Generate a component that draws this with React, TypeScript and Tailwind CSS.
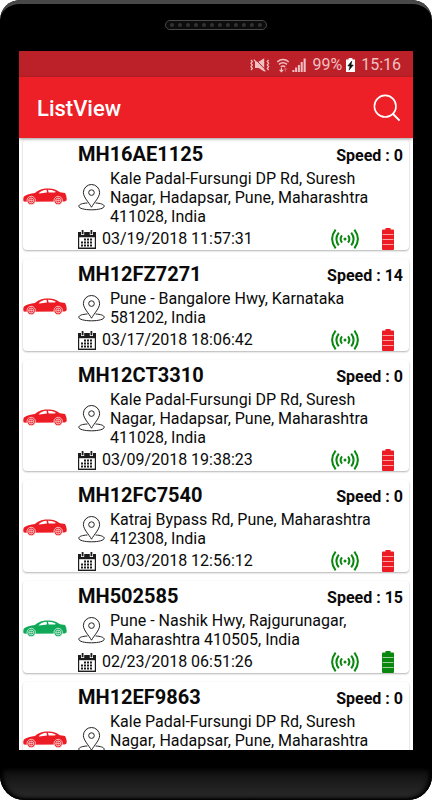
import React from 'react';

type Vehicle = {
    plate: string;
    speed: number;
    address: string;
    time?: string;
    moving?: boolean;
};

const vehicles: Vehicle[] = [
    { plate: 'MH16AE1125', speed: 0, address: 'Kale Padal-Fursungi DP Rd, Suresh Nagar, Hadapsar, Pune, Maharashtra 411028, India', time: '03/19/2018 11:57:31' },
    { plate: 'MH12FZ7271', speed: 14, address: 'Pune - Bangalore Hwy, Karnataka 581202, India', time: '03/17/2018 18:06:42' },
    { plate: 'MH12CT3310', speed: 0, address: 'Kale Padal-Fursungi DP Rd, Suresh Nagar, Hadapsar, Pune, Maharashtra 411028, India', time: '03/09/2018 19:38:23' },
    { plate: 'MH12FC7540', speed: 0, address: 'Katraj Bypass Rd, Pune, Maharashtra 412308, India', time: '03/03/2018 12:56:12' },
    { plate: 'MH502585', speed: 15, address: 'Pune - Nashik Hwy, Rajgurunagar, Maharashtra 410505, India', time: '02/23/2018 06:51:26', moving: true },
    { plate: 'MH12EF9863', speed: 0, address: 'Kale Padal-Fursungi DP Rd, Suresh Nagar, Hadapsar, Pune, Maharashtra' },
];

function CarIcon({ className }: { className: string }) {
    return (
        <svg viewBox="0 0 44 17" className={className} fill="currentColor" aria-hidden="true">
            <path d="M0.8 13.4 C0 12.4 0.2 9.4 1 8.4 C3.2 6.6 7.5 5.6 12 5 C15 2.6 18 0.6 24 0.5 C30.5 0.4 33.5 1.8 37 4.3 L42 4.9 C42.8 6.4 43.8 8.4 43.7 11.4 C43.6 12.8 42.6 13.3 39.8 13.5 L3.5 13.8 Z" />
            <path d="M15.6 5.2 C18 2.8 20.2 1.9 23.6 1.7 L24 4.6 L16.4 5.4 Z M25 1.7 C28.6 1.7 31 2.6 33 4 L31.6 4.5 L25.6 4.6 Z" fill="#fff" />
            <g fill="none" stroke="#fff" strokeWidth="0.7">
                <circle cx="8.2" cy="12.5" r="4.2" fill="currentColor" />
                <circle cx="35.2" cy="12.5" r="4.2" fill="currentColor" />
                <circle cx="8.2" cy="12.5" r="2.5" />
                <circle cx="35.2" cy="12.5" r="2.5" />
                <path d="M8.2 10.2v4.6M5.9 12.5h4.6M35.2 10.2v4.6M32.9 12.5h4.6" strokeWidth="0.5" />
            </g>
        </svg>
    );
}

function PinIcon() {
    return (
        <svg viewBox="0 0 27 27" className="h-[27px] w-[27px] shrink-0" fill="none" stroke="#222" strokeWidth="1" aria-hidden="true">
            <path d="M13.5 23.2 C11 18.6 5.4 13.2 5.4 8.6 A8.1 8.1 0 0 1 21.6 8.6 C21.6 13.2 16 18.6 13.5 23.2 Z" />
            <circle cx="13.5" cy="8.6" r="2.8" />
            <path d="M9.4 19 C4.5 19.2 0.8 20.4 0.8 22.2 C0.8 24.4 6.5 25.8 13.5 25.8 C20.5 25.8 26.2 24.4 26.2 22.2 C26.2 20.4 22.5 19.2 17.6 19" />
        </svg>
    );
}

function CalendarIcon() {
    return (
        <svg viewBox="0 0 18 19" className="h-[19px] w-[18px] shrink-0" aria-hidden="true">
            <path d="M0 2h18v17H0z" fill="#1c1c1c" />
            <path d="M1.2 7.2h15.6v10.4H1.2z" fill="#fff" />
            <path d="M3 0h3.2v5H3zM11.8 0H15v5h-3.2z" fill="#fff" />
            <path d="M3.7 0h1.8v4.2H3.7zM12.5 0h1.8v4.2h-1.8z" fill="#1c1c1c" />
            <path d="M6 8.6h2v2H6zM9 8.6h2v2H9zM12 8.6h2v2h-2zM3 11.6h2v2H3zM6 11.6h2v2H6zM9 11.6h2v2H9zM12 11.6h2v2h-2zM3 14.4h2v2H3zM6 14.4h2v2H6zM9 14.4h2v2H9zM12 14.4h2v2h-2z" fill="#1c1c1c" />
        </svg>
    );
}

function SignalIcon() {
    return (
        <svg viewBox="0 0 28 20" className="h-5 w-7" fill="none" stroke="#0a870f" strokeWidth="2" aria-hidden="true">
            <circle cx="14" cy="10" r="1.5" fill="#0a870f" stroke="none" />
            <path d="M11 6.4 Q8.2 10 11 13.6 M7.8 3.6 Q3 10 7.8 16.4 M4.6 0.6 Q-2.4 10 4.6 19.4" />
            <path d="M17 6.4 Q19.8 10 17 13.6 M20.2 3.6 Q25 10 20.2 16.4 M23.4 0.6 Q30.4 10 23.4 19.4" />
        </svg>
    );
}

function BatteryIcon({ className }: { className: string }) {
    return (
        <svg viewBox="0 0 12 22" className={className} fill="currentColor" aria-hidden="true">
            <path d="M3.5 0h5v1.4H11q1 0 1 1V21q0 1-1 1H1q-1 0-1-1V2.4q0-1 1-1h2.5z" />
            <path d="M0.5 6.5h11M0.5 11.5h11M0.5 16.5h11" stroke="#fff" strokeWidth="1.2" opacity="0.6" />
        </svg>
    );
}

function StatusBar() {
    return (
        <div className="flex h-[26px] shrink-0 items-center justify-end bg-[#bc2028] pt-0.5 pr-3 text-base text-[#f0c0c3]">
            <svg viewBox="0 0 20 14" className="mr-1.5 h-3.5 w-5" fill="currentColor" aria-hidden="true">
                <path d="M5 3.8h3.6L14.2 0.2v13.4L8.6 10H5z" />
                <path d="M4.8 0.6 16 12.4" stroke="#bc2028" strokeWidth="1" />
                <path d="M1 2l1.3 1.6L1 5.3 2.3 7 1 8.7l1.3 1.7L1 12M18.6 2l-1.3 1.6 1.3 1.7L17.3 7l1.3 1.7-1.3 1.7 1.3 1.6M3.8 1.6 15.4 13.4" fill="none" stroke="currentColor" strokeWidth="1.3" />
            </svg>
            <svg viewBox="0 0 14 15" className="mr-0.5 h-[15px] w-3.5" fill="none" stroke="currentColor" strokeWidth="1.5" aria-hidden="true">
                <path d="M1.3 3.8 Q7-0.8 12.7 3.8 M3 6.4 Q7 3.2 11 6.4 M4.8 8.8 Q7 7.2 9.2 8.8" />
                <path d="M5.4 9.8v3.4M3.6 11.8l1.8 1.8 1.8-1.8" strokeWidth="1.2" />
                <path d="M9.4 13.8v-3.4M7.8 11.8l1.6-1.6 1.6 1.6" strokeWidth="1" opacity="0.4" />
            </svg>
            <svg viewBox="0 0 14 14" className="mr-1.5 h-3.5 w-3.5" fill="currentColor" aria-hidden="true">
                <path d="M0.4 12h2v2h-2zM3.1 9.6h2V14h-2zM5.9 7h2v7h-2zM8.7 4h2v10h-2zM11.6 0.6h2.1V14h-2.1z" />
            </svg>
            <span>99%</span>
            <svg viewBox="0 0 9 14" className="mr-1.5 ml-1 h-3.5 w-[9px]" aria-hidden="true">
                <path d="M2.6 0h3.8v1.4H9V14H0V1.4h2.6z" fill="#fff" />
                <path d="M5.8 3 1.8 8h2.2L3 12.2 7.3 7H5z" fill="#111" stroke="#111" strokeWidth="0.6" />
            </svg>
            <span>15:16</span>
        </div>
    );
}

function VehicleCard({ vehicle }: { vehicle: Vehicle }) {
    return (
        <li className="flex shrink-0 items-center rounded-sm bg-white pt-[3px] shadow-[0_1px_2px_rgba(0,0,0,0.3)]">
            <div className="w-[55px] shrink-0">
                <CarIcon className={vehicle.moving ? 'h-[17px] w-11 text-[#0fa958]' : 'h-[17px] w-11 text-[#ed1c24]'} />
            </div>
            <div className="min-w-0 flex-1 pr-1.5">
                <div className="flex h-6 items-baseline justify-between">
                    <h2 className="text-xl leading-6 font-bold">{vehicle.plate}</h2>
                    <span className="text-base leading-6 font-bold">Speed : {vehicle.speed}</span>
                </div>
                <div className="mt-[3px] flex items-center gap-[5px]">
                    <PinIcon />
                    <p className={vehicle.time ? 'text-base leading-[19px]' : 'min-h-[57px] text-base leading-[19px]'}>{vehicle.address}</p>
                </div>
                <div className="mt-0.5 flex h-[22px] items-center">
                    {vehicle.time && (
                        <>
                            <CalendarIcon />
                            <time className="ml-1.5 flex-1 text-base leading-[22px]">{vehicle.time}</time>
                            <SignalIcon />
                            <BatteryIcon className={vehicle.moving ? 'mr-[9px] ml-[23px] h-[22px] w-3 text-[#0a870f]' : 'mr-[9px] ml-[23px] h-[22px] w-3 text-[#ed1c24]'} />
                        </>
                    )}
                </div>
            </div>
        </li>
    );
}

export default function App() {
    return (
        <div className="h-screen bg-white font-['Roboto',sans-serif]">
            <div className="flex h-full flex-col overflow-hidden rounded-t-[20px] rounded-b-[24px] bg-black">
                {/* Earpiece */}
                <div className="flex h-[51px] shrink-0 justify-center rounded-t-[20px] border-t-4 border-[#484848] pt-4">
                    <div className="flex h-2.5 w-[102px] items-center rounded-full border border-[#4a4a4a] bg-[#0c0c0c] px-1">
                        <div className="h-1 w-full border-b-4 border-dotted border-[#333]" />
                    </div>
                </div>

                {/* Screen */}
                <div className="mr-[19px] ml-[19px] flex min-h-0 flex-1 flex-col bg-white">
                    <StatusBar />
                    <header className="z-10 flex h-[61px] shrink-0 items-center justify-between bg-[#ed2027] pr-3 pl-[18px] text-white shadow-[0_1px_3px_rgba(0,0,0,0.4)]">
                        <h1 className="pt-0.5 text-[22px] font-medium">ListView</h1>
                        <button type="button" aria-label="Search">
                            <svg viewBox="0 0 28 28" className="h-7 w-7" fill="none" stroke="currentColor" strokeWidth="1.6" aria-hidden="true">
                                <circle cx="12.2" cy="12.2" r="10.8" />
                                <path d="M19.8 19.8 26.6 26.6" strokeWidth="2" />
                            </svg>
                        </button>
                    </header>
                    <ul className="flex min-h-0 flex-1 flex-col gap-[9px] overflow-y-auto px-1 pt-px text-[#0a0a0a] [scrollbar-width:none]">
                        {vehicles.map((vehicle) => (
                            <VehicleCard key={vehicle.plate} vehicle={vehicle} />
                        ))}
                    </ul>
                </div>

                {/* Bottom bezel */}
                <div className="h-[50px] shrink-0 pt-[18px]">
                    <div className="h-8 rounded-b-[24px] bg-linear-to-b from-[#0c0c0c] via-[#1e1e1e] to-[#2b2b2b] shadow-[inset_0_-1px_3px_#000,inset_3px_0_5px_#000,inset_-3px_0_5px_#000]" />
                </div>
            </div>
        </div>
    );
}
